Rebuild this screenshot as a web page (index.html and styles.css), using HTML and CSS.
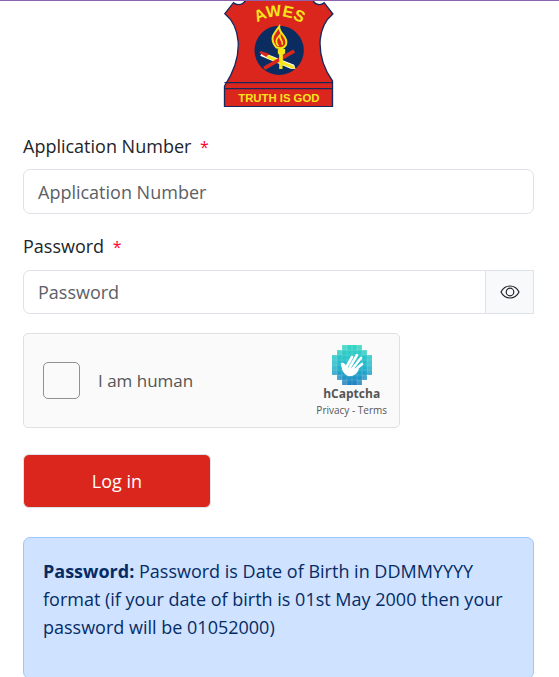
FILE: index.html
```html
<!DOCTYPE html>
<html lang="en">
<head>
    <meta charset="UTF-8">
    <meta name="viewport" content="width=device-width, initial-scale=1.0">
    <title>AWES Login</title>
    <link rel="stylesheet" href="styles.css">
</head>
<body>
    <div class="login-page">
        <!-- AWES crest -->
        <svg class="logo" viewBox="28 3 330 318" role="img" aria-label="AWES - Truth is God">
            <path d="M94 0H296Q302 14 315 14Q324 14 330 8L356 42Q322 70 318 120Q314 185 355 243V320H31V258Q76 190 72 125Q68 70 32 41L58 8Q64 14 73 14Q88 14 94 0Z" fill="#db261d" stroke="#17295c" stroke-width="4"/>
            <path d="M31 248H355M31 266H355" stroke="#17295c" stroke-width="4"/>
            <circle cx="195" cy="151" r="74" fill="#0b2c60"/>
            <path id="arc" d="M118 75Q195 22 274 77" fill="none"/>
            <text class="logo-name" text-anchor="middle"><textPath href="#arc" startOffset="50%">AWES</textPath></text>
            <path d="M145 157L240 194L244 207L229 206L138 167Z" fill="#fff"/>
            <path d="M140 153L166 162L156 171L135 158Z" fill="#db261d"/>
            <path d="M162 166L238 197L243 207L231 204L156 173Z" fill="#f5e51b"/>
            <path d="M150 205L240 153" stroke="#db261d" stroke-width="11"/>
            <path d="M191 147H213V160L206 165V180L205 207H195V165L191 160Z" fill="#f5e51b"/>
            <path d="M187 143C164 118 178 101 195 80C195 102 222 111 216 132C213 141 207 144 202 145Z" fill="#db261d" stroke="#f5e51b" stroke-width="6"/>
            <path d="M193 139C181 124 187 116 197 105C195 119 208 122 204 134" fill="none" stroke="#f5e51b" stroke-width="5"/>
            <text class="logo-motto" x="194" y="307" text-anchor="middle">TRUTH IS GOD</text>
        </svg>

        <form class="login-form">
            <label class="field-label" for="appNumber">Application Number <span class="required">*</span></label>
            <input class="form-control" type="text" id="appNumber" placeholder="Application Number">

            <label class="field-label" for="password">Password <span class="required">*</span></label>
            <div class="input-group">
                <input class="form-control" type="password" id="password" placeholder="Password">
                <button class="eye-btn" type="button" aria-label="Show password">
                    <svg viewBox="0 0 20 14" fill="none" stroke="#212529" stroke-width="1.2">
                        <path d="M1 7C3 3 6 1 10 1S17 3 19 7C17 11 14 13 10 13S3 11 1 7Z"/>
                        <circle cx="10" cy="7" r="3.8"/>
                    </svg>
                </button>
            </div>

            <div class="captcha">
                <input class="captcha-check" type="checkbox" id="human">
                <label class="captcha-label" for="human">I am human</label>
                <div class="captcha-brand">
                    <svg class="captcha-logo" viewBox="0 0 40 40">
                        <defs>
                            <linearGradient id="teal" x1="0" y1="0" x2="0" y2="1">
                                <stop offset="0" stop-color="#2bd5bf"/>
                                <stop offset="0.5" stop-color="#14b5c9"/>
                                <stop offset="1" stop-color="#1478bd"/>
                            </linearGradient>
                        </defs>
                        <path d="M10 0H30V5H35V10H40V30H35V35H30V40H10V35H5V30H0V10H5V5H10Z" fill="url(#teal)" opacity="0.8"/>
                        <path d="M15 0H25V5H30V10H35V30H30V35H25V40H15V35H10V30H5V10H10V5H15Z" fill="url(#teal)" opacity="0.7"/>
                        <path d="M5 5V35M10 0V40M15 0V40M20 0V40M25 0V40M30 0V40M35 5V35M5 5H35M0 10H40M0 15H40M0 20H40M0 25H40M0 30H40M5 35H35" stroke="#fff" stroke-width="0.5" opacity="0.3"/>
                        <path d="M10 18C12 17 13 19 15 22L27 24C25 29 21 32 16 31C11 29 10 24 10 18Z" fill="#fff"/>
                        <path d="M15 21L20 12M18 22L25 10M21 23L29 13M22 26L30 19M12 26L10 19" stroke="#fff" stroke-width="2.6" stroke-linecap="round"/>
                    </svg>
                    <strong class="captcha-name">hCaptcha</strong>
                    <div class="captcha-links"><a href="#">Privacy</a> - <a href="#">Terms</a></div>
                </div>
            </div>

            <button class="login-btn" type="submit">Log in</button>
        </form>

        <p class="info">
            <strong>Password:</strong> Password is Date of Birth in DDMMYYYY format (if your date of birth is 01st May 2000 then your password will be 01052000)
        </p>
    </div>
</body>
</html>
```
FILE: styles.css
```css
* {
    box-sizing: border-box;
}
body {
    margin: 0;
    border-top: 1px solid #8e63ad;
    font-family: "Open Sans", "Noto Sans", sans-serif;
    font-size: 18px;
    line-height: 28px;
    color: #212529;
    background-color: #fff;
}
.login-page {
    padding: 0 25px 0 23px;
}
.logo {
    display: block;
    width: 111px;
    height: 106px;
    margin: 0 auto;
}
.logo-name {
    font-family: "Liberation Sans", sans-serif;
    font-weight: bold;
    font-size: 48px;
    fill: #f5e51b;
}
.logo-motto {
    font-family: "Liberation Sans", sans-serif;
    font-weight: bold;
    font-size: 34px;
    fill: #f5e51b;
}
.login-form {
    padding-top: 25px;
}
.field-label {
    display: block;
    margin-bottom: 9px;
}
.required {
    margin-left: 4px;
    font-size: 16px;
    line-height: 16px;
    color: #ff0033;
}
.form-control {
    display: block;
    width: 100%;
    height: 45px;
    margin-bottom: 18px;
    padding: 0 14px;
    border: 1px solid #dee2e6;
    border-radius: 7px;
    font: inherit;
    color: #212529;
    background-color: #fff;
}
.form-control::placeholder {
    color: #5c6066;
    opacity: 1;
}
.input-group {
    display: flex;
    margin: 10px 0 19px;
}
.input-group .form-control {
    flex: 1;
    min-width: 0;
    height: 44px;
    margin: 0;
    border-radius: 7px 0 0 7px;
}
.eye-btn {
    display: flex;
    align-items: center;
    justify-content: center;
    width: 48px;
    padding: 0;
    border: 1px solid #dee2e6;
    border-left: none;
    background-color: #f8f9fa;
    cursor: pointer;
}
.eye-btn svg {
    width: 20px;
    height: 14px;
}
.captcha {
    display: flex;
    align-items: center;
    max-width: 377px;
    height: 95px;
    margin-bottom: 26px;
    padding: 0 12px 0 19px;
    border: 1px solid #e0e0e0;
    border-radius: 5px;
    background-color: #fafafa;
    color: #555;
}
.captcha-check {
    appearance: none;
    width: 37px;
    height: 37px;
    margin: 0 18px 0 0;
    border: 1px solid #919191;
    border-radius: 5px;
    background-color: #fafafa;
}
.captcha-label {
    flex: 1;
    font-size: 17px;
}
.captcha-brand {
    display: flex;
    flex-direction: column;
    align-items: center;
}
.captcha-logo {
    width: 40px;
    height: 40px;
}
.captcha-name {
    font-size: 12px;
    line-height: 18px;
}
.captcha-links {
    font-size: 10px;
    line-height: 14px;
}
.captcha-links a {
    color: inherit;
    text-decoration: none;
}
.login-btn {
    display: block;
    width: 188px;
    height: 54px;
    border: 1px solid #dee2e6;
    border-radius: 6px;
    font: inherit;
    color: #fff;
    background-color: #db261d;
    cursor: pointer;
}
.info {
    min-height: 142px;
    margin: 29px 0 0;
    padding: 19px;
    border: 1px solid #9ec5fe;
    border-radius: 7px;
    color: #052c65;
    background-color: #cfe2ff;
}
```
